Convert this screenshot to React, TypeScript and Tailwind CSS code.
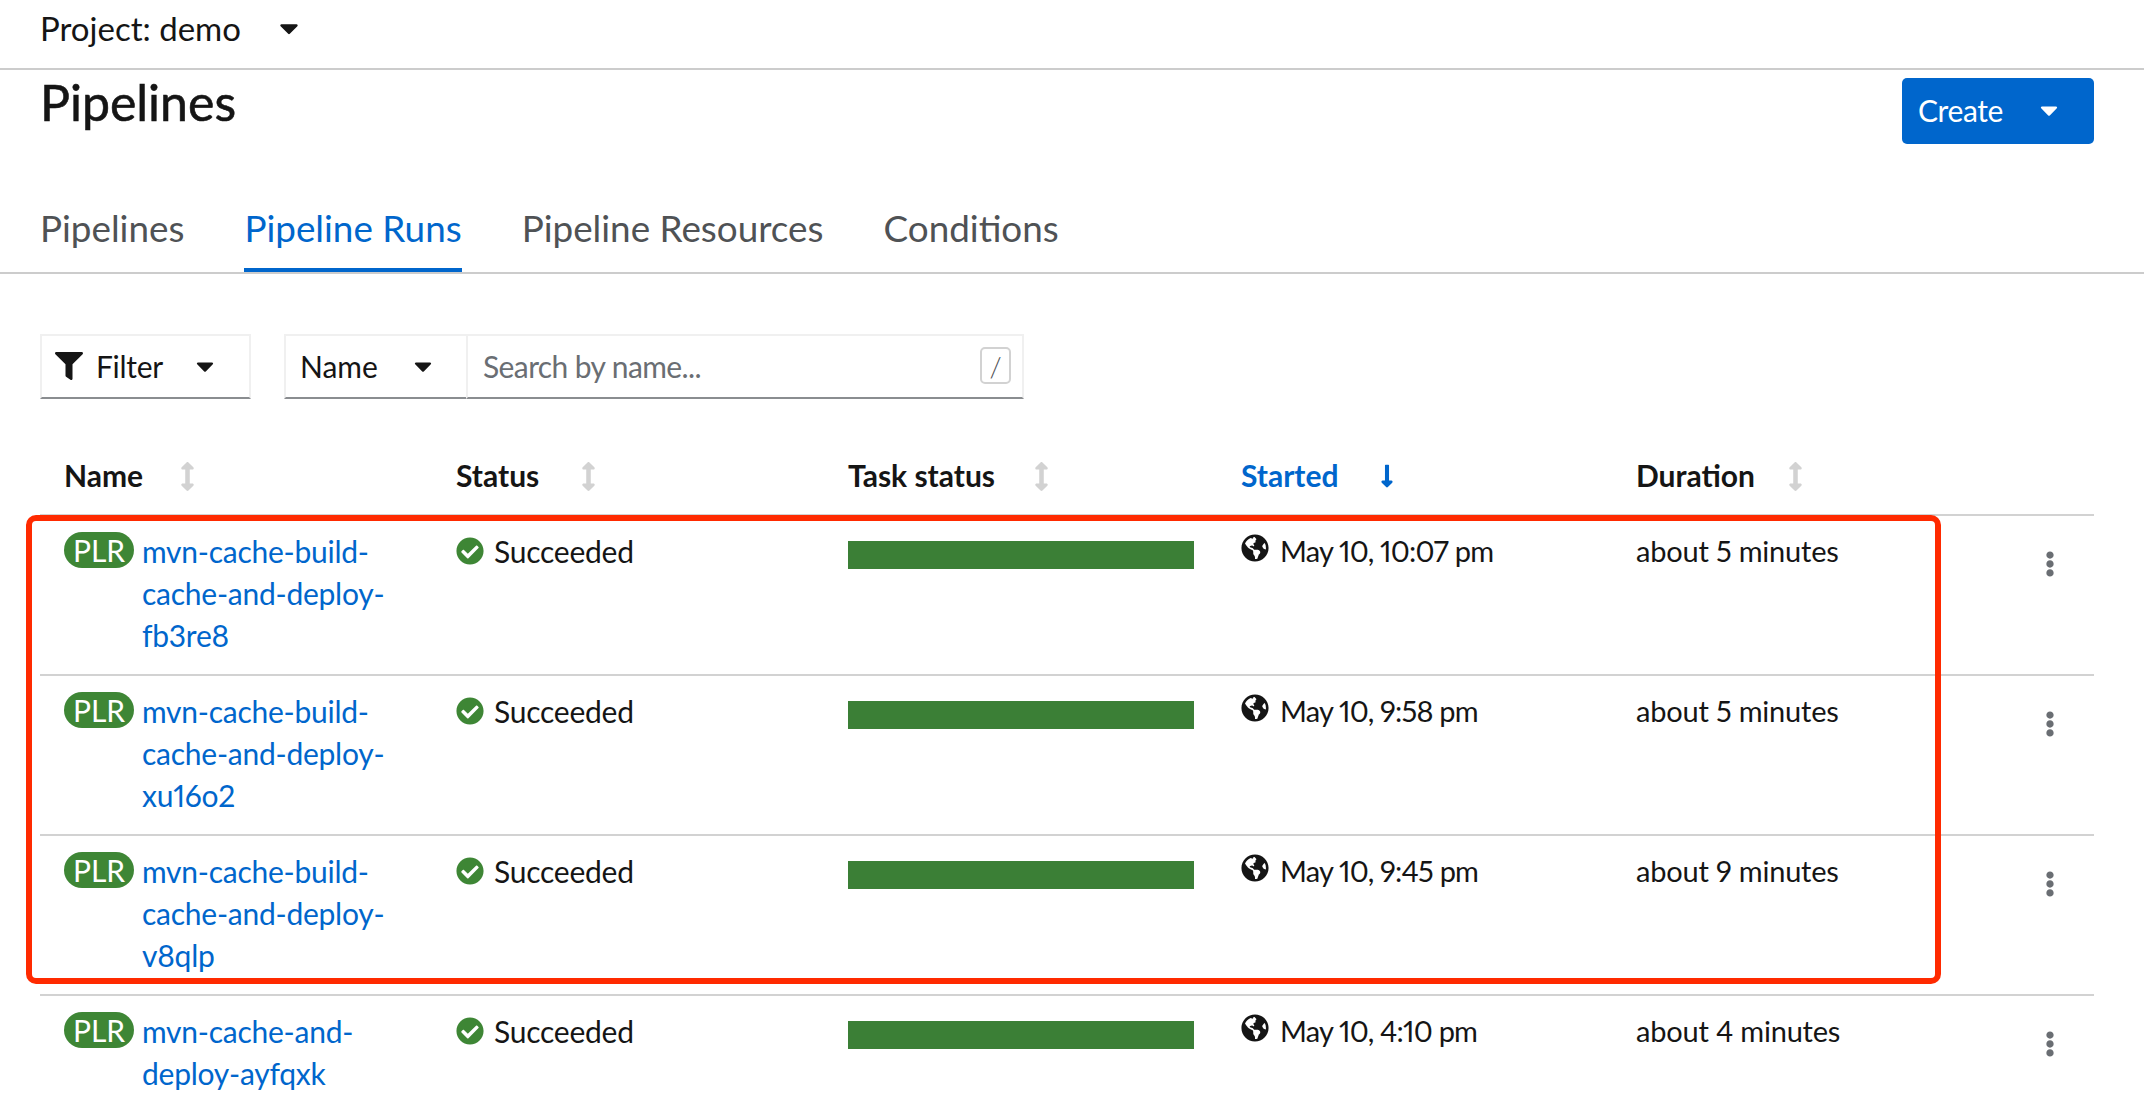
import { FaArrowsAltV, FaCaretDown, FaCheckCircle, FaEllipsisV, FaFilter, FaGlobeAmericas, FaLongArrowAltDown } from "react-icons/fa";

const runs = [
  { name: "mvn-cache-build-cache-and-deploy-fb3re8", started: "May 10, 10:07 pm", duration: "about 5 minutes" },
  { name: "mvn-cache-build-cache-and-deploy-xu16o2", started: "May 10, 9:58 pm", duration: "about 5 minutes" },
  { name: "mvn-cache-build-cache-and-deploy-v8qlp", started: "May 10, 9:45 pm", duration: "about 9 minutes" },
  { name: "mvn-cache-and-deploy-ayfqxk", started: "May 10, 4:10 pm", duration: "about 4 minutes" },
];

const tabs = ["Pipelines", "Pipeline Runs", "Pipeline Resources", "Conditions"];

const gridCols = "grid grid-cols-[392px_392px_393px_395px_378px_104px]";

const SortHead = ({ label, iconX }: { label: string; iconX: string }) => (
  <div className="relative flex items-center pl-6 pt-[11px]">
    <span className="font-bold text-[#151515]">{label}</span>
    <FaArrowsAltV className={`absolute top-[32px] text-[29px] text-[#d2d2d2] ${iconX}`} />
  </div>
);

const App = () => {
  return (
    <div className="relative h-screen overflow-hidden bg-white text-[30px] leading-[42px] text-[#151515] proportional-nums font-['Lato',sans-serif]">
      {/* project bar */}
      <div className="flex h-[70px] items-center border-b-2 border-[#cccccc] px-10 pb-[12px]">
        <span className="w-[234px] text-[33px]">Project: demo</span>
        <FaCaretDown className="text-[30px]" />
      </div>

      {/* title */}
      <div className="flex h-[136px] justify-between pl-10 pr-[50px]">
        <h1 className="text-[50px] leading-[64px] [-webkit-text-stroke:0.6px_#151515]">Pipelines</h1>
        <button className="mt-2 flex h-[66px] w-[192px] items-center rounded-[5px] bg-[#0066cc] pb-[2px] pl-4 text-white">
          <span className="w-[117px] text-left tracking-[-0.4px]">Create</span>
          <FaCaretDown className="text-[28px]" />
        </button>
      </div>

      {/* tabs */}
      <div className="flex h-[68px] gap-[60px] border-b-2 border-[#cccccc] px-10 text-[36.85px] text-[#4f5255]">
        {tabs.map((tab) => (
          <div
            key={tab}
            className={tab === "Pipeline Runs" ? "h-[66px] border-b-4 border-[#0066cc] pt-[1px] text-[#0066cc]" : "h-[66px] pt-[1px]"}
          >
            {tab}
          </div>
        ))}
      </div>

      {/* toolbar */}
      <div className="ml-10 mt-[60px] flex h-[65px] items-stretch">
        <div className="flex w-[211px] items-center border-2 border-[#f0f0f0] border-b-[#8a8d90] pb-[2px] pl-[13px]">
          <FaFilter className="text-[28px]" />
          <span className="ml-[13px] w-[95px] tracking-[-0.3px]">Filter</span>
          <FaCaretDown className="text-[28px]" />
        </div>
        <div className="ml-[33px] flex w-[182px] items-center border-2 border-r-0 border-[#f0f0f0] border-b-[#8a8d90] pb-[2px] pl-[14px]">
          <span className="w-[109px]">Name</span>
          <FaCaretDown className="text-[28px]" />
        </div>
        <div className="flex w-[558px] items-center justify-between border-2 border-[#f0f0f0] border-b-[#8a8d90] pb-[2px] pl-[15px] pr-[11px]">
          <span className="tracking-[-0.6px] text-[#6a6e73]">Search by name...</span>
          <span className="flex h-[37px] w-[31px] items-center justify-center rounded-[5px] border-2 border-[#d2d2d2] text-[28px] font-light text-[#4f5255]">/</span>
        </div>
      </div>

      {/* table */}
      <div className="ml-10 mt-[31px] w-[2054px]">
        <div className={`${gridCols} h-[84px] pb-[6px]`}>
          <SortHead label="Name" iconX="left-[133px]" />
          <SortHead label="Status" iconX="left-[142px]" />
          <SortHead label="Task status" iconX="left-[203px]" />
          <div className="relative flex items-center pl-6 pt-[11px]">
            <span className="font-bold text-[#0066cc]">Started</span>
            <FaLongArrowAltDown className="absolute left-[157px] top-[33px] text-[26px] text-[#0066cc]" />
          </div>
          <SortHead label="Duration" iconX="left-[169px]" />
          <div />
        </div>
        {runs.map((run) => (
          <div key={run.name} className={`${gridCols} h-[160px] border-t-2 border-[#d2d2d2] pt-[14px]`}>
            <div className="flex items-start pl-6 pr-6">
              <span className="mt-[2px] flex h-[36px] w-[70px] shrink-0 items-center justify-center rounded-full bg-[#3e8635] text-white">PLR</span>
              <a className="ml-2 tracking-[-0.25px] text-[#0066cc]">{run.name}</a>
            </div>
            <div className="flex items-start pl-6">
              <FaCheckCircle className="mt-[7px] text-[28px] text-[#3e8635]" />
              <span className="ml-[10px] tracking-[-0.25px]">Succeeded</span>
            </div>
            <div className="pl-6 pt-[11px]">
              <div className="h-[28px] w-[346px] bg-[#3b7f36]" />
            </div>
            <div className="flex items-start pl-6">
              <FaGlobeAmericas className="mt-[4px] text-[28px]" />
              <span className="ml-[11px] text-[29px] tracking-[-0.8px]">{run.started}</span>
            </div>
            <div className="pl-6 text-[29px] tracking-[-0.2px]">{run.duration}</div>
            <div className="flex justify-center pl-[16px] pt-[21px]">
              <FaEllipsisV className="text-[26px] text-[#6a6e73]" />
            </div>
          </div>
        ))}
      </div>

      {/* red highlight over the first three runs */}
      <div className="absolute left-[26px] top-[515px] h-[469px] w-[1915px] rounded-[10px] border-[6px] border-[#ff2a00]" />
    </div>
  );
};

export default App;
